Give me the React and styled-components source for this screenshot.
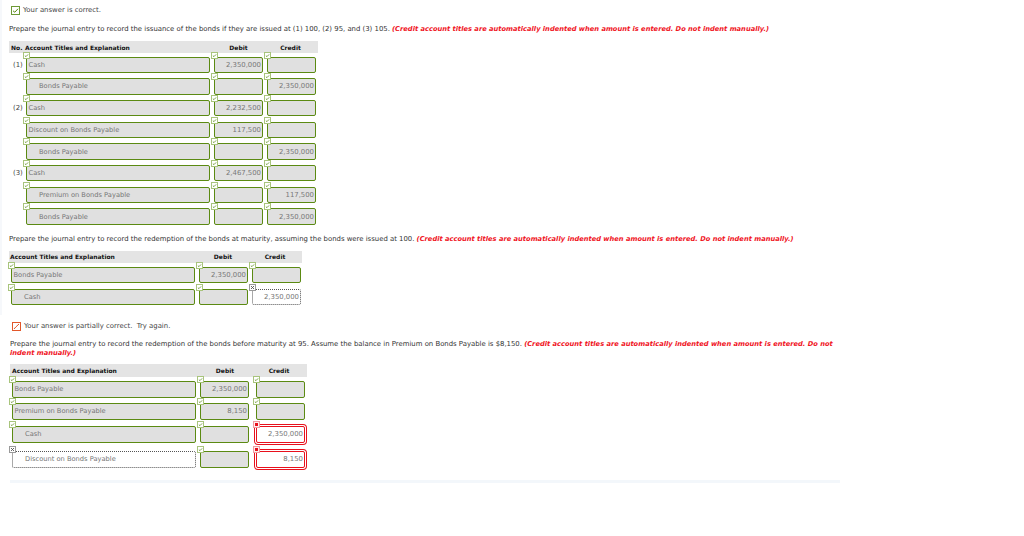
import React from "react";
import styled, { createGlobalStyle } from "styled-components";

const GlobalStyle = createGlobalStyle`
  html, body { margin: 0; padding: 0; background: #fff; }
  body {
    font-family: "DejaVu Sans", Verdana, sans-serif;
    font-size: 6.9px;
    color: #444;
    width: 1024px;
    height: 536px;
    overflow: hidden;
  }
`;

const Page = styled.div`
  width: 840px;
  padding-top: 5px;
  box-sizing: border-box;
`;

const AnsweredPart = styled.section`
  border-left: 2px solid #f6f8fb;
  margin-top: -5px;
  padding-top: 5px;
  height: 315px;
  box-sizing: border-box;
`;

const StatusLine = styled.div`
  display: flex;
  align-items: center;
  gap: 3px;
  height: 10px;
  margin-left: ${({ $left }) => $left}px;
  margin-top: ${({ $top }) => $top || 0}px;
`;

const StatusIcon = styled.span`
  display: flex;
  align-items: center;
  justify-content: center;
  width: 7px;
  height: 7px;
  border: 1px solid ${({ $partial }) => ($partial ? "#e2572a" : "#6d9a35")};
`;

const Prompt = styled.p`
  margin: ${({ $top }) => $top}px 0 0 ${({ $left }) => $left}px;
  width: 826px;
  line-height: 9px;
  color: #333;
`;

const Note = styled.em`
  color: #f0141e;
  font-weight: bold;
  font-size: 6.7px;
`;

const Table = styled.div`
  margin: ${({ $top }) => $top}px 0 0 ${({ $left }) => $left}px;
  width: ${({ $width }) => $width}px;
`;

const HeaderBar = styled.div`
  display: grid;
  grid-template-columns: ${({ $columns }) => $columns};
  align-items: center;
  height: ${({ $height }) => $height || 12}px;
  background: #e4e4e4;
  font-size: 6px;
  font-weight: bold;
  color: #111;
`;

const HeaderCell = styled.span`
  text-align: ${({ $center }) => ($center ? "center" : "left")};
  padding-left: ${({ $pad }) => $pad || 0}px;
`;

const Row = styled.div`
  display: grid;
  grid-template-columns: ${({ $columns }) => $columns};
  column-gap: 4px;
  height: ${({ $height }) => $height}px;
  padding-left: ${({ $inset }) => $inset || 0}px;
  align-items: end;
`;

const RowNumber = styled.span`
  height: 12px;
  padding-left: 4px;
  color: #444;
`;

const Field = styled.div`
  position: relative;
  box-sizing: border-box;
  height: 16.5px;
  width: ${({ $amount }) => ($amount ? "49px" : "auto")};
  display: flex;
  align-items: center;
  justify-content: ${({ $amount }) => ($amount ? "flex-end" : "flex-start")};
  padding: ${({ $indent }) => ($indent ? "0 1px 0 12px" : "0 1px 0 1.5px")};
  border-radius: 2px;
  font-size: ${({ $amount }) => ($amount ? "6.9px" : "6.7px")};
  color: #777;
  background: ${({ $state }) => ($state === "ok" ? "#e0e0e0" : "#fff")};
  border: ${({ $state }) =>
    $state === "ok"
      ? "1.4px solid #5b8a12"
      : $state === "bad"
      ? "1px solid #e8101c"
      : "1px dotted #555"};
  box-shadow: ${({ $state }) => ($state === "bad" ? "0 0 0 1px #fff, 0 0 0 2px #e8101c" : "none")};
`;

const Badge = styled.span`
  position: absolute;
  left: -4px;
  top: -6px;
  width: 5px;
  height: 5px;
  background: ${({ $state }) => ($state === "bad" ? "#fdeeee" : "#fff")};
  border: 1px solid ${({ $state }) =>
    $state === "ok" ? "#a8c47c" : $state === "bad" ? "#f19aa0" : "#999"};
  display: flex;
  align-items: center;
  justify-content: center;
`;

const BadgeMark = ({ state }) => {
  if (state === "ok") {
    return (
      <svg width="5" height="5" viewBox="0 0 5 5">
        <path d="M0.9 2.8 L2 3.6 L4.1 1.4" fill="none" stroke="#6d9a35" strokeWidth="0.9" />
      </svg>
    );
  }
  if (state === "bad") {
    return (
      <svg width="5" height="5" viewBox="0 0 5 5">
        <rect x="1" y="1" width="3" height="3" fill="#e8101c" />
      </svg>
    );
  }
  return (
    <svg width="5" height="5" viewBox="0 0 5 5">
      <path d="M1 1 L4 4 M4 1 L1 4" stroke="#555" strokeWidth="0.9" />
    </svg>
  );
};

const Entry = ({ state = "ok", indent, amount, children }) => (
  <Field $state={state} $indent={indent} $amount={amount}>
    <Badge $state={state}>
      <BadgeMark state={state} />
    </Badge>
    {children}
  </Field>
);

const LedgerRow = ({ columns, height, inset, withNumber, row }) => (
  <Row $columns={columns} $height={height} $inset={inset}>
    {withNumber && <RowNumber>{row.number}</RowNumber>}
    <Entry state={row.titleState} indent={row.indent}>{row.title}</Entry>
    <Entry state={row.debitState} amount>{row.debit}</Entry>
    <Entry state={row.creditState} amount>{row.credit}</Entry>
  </Row>
);

const BottomBand = styled.div`
  height: 3px;
  margin: 12px 0 0 10px;
  background: #f3f7fb;
`;

const issuance = [
  { number: "(1)", title: "Cash", debit: "2,350,000" },
  { title: "Bonds Payable", indent: true, credit: "2,350,000" },
  { number: "(2)", title: "Cash", debit: "2,232,500" },
  { title: "Discount on Bonds Payable", debit: "117,500" },
  { title: "Bonds Payable", indent: true, credit: "2,350,000" },
  { number: "(3)", title: "Cash", debit: "2,467,500" },
  { title: "Premium on Bonds Payable", indent: true, credit: "117,500" },
  { title: "Bonds Payable", indent: true, credit: "2,350,000" },
];

const redemption = [
  { title: "Bonds Payable", debit: "2,350,000" },
  { title: "Cash", indent: true, credit: "2,350,000", creditState: "open" },
];

const early = [
  { title: "Bonds Payable", debit: "2,350,000", height: 20.5 },
  { title: "Premium on Bonds Payable", debit: "8,150", height: 22 },
  { title: "Cash", indent: true, credit: "2,350,000", creditState: "bad", height: 23 },
  { title: "Discount on Bonds Payable", indent: true, titleState: "open", credit: "8,150", creditState: "bad", height: 25 },
];

const noteText =
  "(Credit account titles are automatically indented when amount is entered. Do not indent manually.)";

const okRow = { titleState: "ok", debitState: "ok", creditState: "ok" };

export default function App() {
  return (
    <Page>
      <GlobalStyle />
      <AnsweredPart>
        <StatusLine $left={9}>
          <StatusIcon>
            <svg width="7" height="7" viewBox="0 0 7 7">
              <path d="M1 3.8 L2.8 5.2 L6 1.8" fill="none" stroke="#5b8a12" strokeWidth="1" />
            </svg>
          </StatusIcon>
          <span>Your answer is correct.</span>
        </StatusLine>

        <Prompt $top={10} $left={7}>
          Prepare the journal entry to record the issuance of the bonds if they are issued at (1) 100, (2) 95, and (3) 105.{" "}
          <Note>{noteText}</Note>
        </Prompt>

        <Table $top={7} $left={7} $width={309}>
          <HeaderBar $columns="16px 189px 49px 55px">
            <HeaderCell $pad={2}>No.</HeaderCell>
            <HeaderCell>Account Titles and Explanation</HeaderCell>
            <HeaderCell $center>Debit</HeaderCell>
            <HeaderCell $center>Credit</HeaderCell>
          </HeaderBar>
          {issuance.map((row, i) => (
            <LedgerRow
              key={i}
              columns="13px 184px 49px 49px"
              height={i === 0 ? 20 : 21.7}
              withNumber
              row={{ ...okRow, ...row }}
            />
          ))}
        </Table>

        <Prompt $top={10} $left={7}>
          Prepare the journal entry to record the redemption of the bonds at maturity, assuming the bonds were issued at 100.{" "}
          <Note>{noteText}</Note>
        </Prompt>

        <Table $top={7} $left={7} $width={293}>
          <HeaderBar $columns="189px 50px 54px">
            <HeaderCell $pad={1}>Account Titles and Explanation</HeaderCell>
            <HeaderCell $center>Debit</HeaderCell>
            <HeaderCell $center>Credit</HeaderCell>
          </HeaderBar>
          {redemption.map((row, i) => (
            <LedgerRow
              key={i}
              columns="184px 49px 49px"
              height={i === 0 ? 20.5 : 22}
              inset={2}
              row={{ ...okRow, ...row }}
            />
          ))}
        </Table>
      </AnsweredPart>

      <StatusLine $left={12} $top={6}>
        <StatusIcon $partial>
          <svg width="7" height="7" viewBox="0 0 7 7">
            <path d="M1 6 L3 3.8 L6 1" fill="none" stroke="#e2572a" strokeWidth="1" />
          </svg>
        </StatusIcon>
        <span>Your answer is partially correct. &nbsp;Try again.</span>
      </StatusLine>

      <Prompt $top={9} $left={10}>
        Prepare the journal entry to record the redemption of the bonds before maturity at 95. Assume the balance in Premium on Bonds Payable is $8,150.{" "}
        <Note>{noteText}</Note>
      </Prompt>

      <Table $top={6} $left={10} $width={297}>
        <HeaderBar $columns="189px 52px 56px" $height={13}>
          <HeaderCell $pad={2}>Account Titles and Explanation</HeaderCell>
          <HeaderCell $center>Debit</HeaderCell>
          <HeaderCell $center>Credit</HeaderCell>
        </HeaderBar>
        {early.map((row, i) => (
          <LedgerRow
            key={i}
            columns="184px 52px 49px"
            height={row.height}
            inset={2}
            row={{ ...okRow, ...row }}
          />
        ))}
      </Table>
      <BottomBand />
    </Page>
  );
}
